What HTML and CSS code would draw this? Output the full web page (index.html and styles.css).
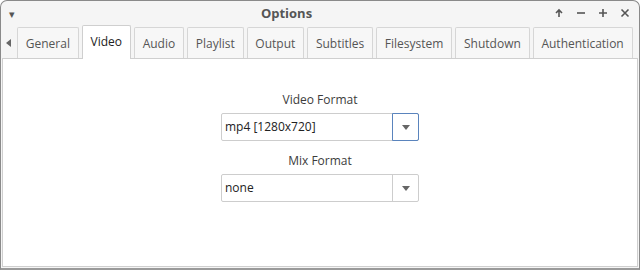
FILE: index.html
```html
<!DOCTYPE html>
<html lang="en">
<head>
  <meta charset="UTF-8" />
  <title>Options</title>
  <link rel="stylesheet" href="styles.css">
</head>
<body>
  <div class="window">
    <div class="titlebar">
      <span class="menu-btn">&#9662;</span>
      <div class="title">Options</div>
      <div class="controls">
        <svg width="10" height="10" viewBox="0 0 10 10"><path d="M5 9V2M2 5l3-3 3 3" stroke="#555" stroke-width="1.6" fill="none"/></svg>
        <svg width="10" height="10" viewBox="0 0 10 10"><path d="M1 5h8" stroke="#555" stroke-width="1.6"/></svg>
        <svg width="10" height="10" viewBox="0 0 10 10"><path d="M1 5h8M5 1v8" stroke="#555" stroke-width="1.6"/></svg>
        <svg width="10" height="10" viewBox="0 0 10 10"><path d="M1.5 1.5l7 7M8.5 1.5l-7 7" stroke="#555" stroke-width="1.6"/></svg>
      </div>
    </div>

    <div class="tabbar">
      <span class="scroll left"></span>
      <div class="tabs">
        <div class="tab">General</div>
        <div class="tab active">Video</div>
        <div class="tab">Audio</div>
        <div class="tab">Playlist</div>
        <div class="tab">Output</div>
        <div class="tab">Subtitles</div>
        <div class="tab">Filesystem</div>
        <div class="tab">Shutdown</div>
        <div class="tab">Authentication</div>
      </div>
      <span class="scroll right"></span>
    </div>

    <div class="pane">
      <div class="field">
        <label>Video Format</label>
        <div class="combo focused">
          <span class="value">mp4 [1280x720]</span>
          <span class="drop"><i></i></span>
        </div>
      </div>
      <div class="field">
        <label>Mix Format</label>
        <div class="combo">
          <span class="value">none</span>
          <span class="drop"><i></i></span>
        </div>
      </div>
    </div>
  </div>
</body>
</html>
```

FILE: styles.css
```css
html, body {
  margin: 0;
  height: 100%;
  background: #ffffff;
}

body {
  font-family: 'Open Sans', sans-serif;
  font-size: 12px;
  line-height: 17px;
  color: #3c3c3c;
}

.window {
  box-sizing: border-box;
  width: 640px;
  height: 270px;
  border: 1px solid #8a8a8a;
  border-bottom: 2px solid #9a9a9a;
  border-radius: 7px 7px 0 0;
  background: #f5f5f5;
  display: flex;
  flex-direction: column;
}

.titlebar {
  height: 24px;
  display: flex;
  align-items: center;
}

.menu-btn {
  font-size: 11px;
  color: #555;
  margin-left: 8px;
  width: 10px;
}

.title {
  flex: 1;
  text-align: center;
  font-weight: 700;
  font-size: 13px;
  color: #555;
  margin-top: 1px;
}

.controls {
  margin-right: 9px;
  display: flex;
  gap: 12px;
}

.tabbar {
  display: flex;
  align-items: flex-end;
  height: 33px;
}

.scroll {
  width: 0;
  height: 0;
  border-top: 4px solid transparent;
  border-bottom: 4px solid transparent;
  align-self: center;
  margin-top: 2px;
}
.scroll.left {
  border-right: 5px solid #666;
  margin-left: 5px;
  margin-right: 6px;
}
.scroll.right {
  border-left: 5px solid #666;
  margin-left: 7px;
}

.tabs {
  display: flex;
  gap: 3px;
  align-items: flex-end;
}

.tab {
  box-sizing: border-box;
  height: 31px;
  padding: 7px 7.8px 0;
  border: 1px solid #d6d6d6;
  border-bottom: none;
  border-radius: 2px 2px 0 0;
  background: #f7f7f7;
  color: #555;
  white-space: nowrap;
}

.tab.active {
  height: 34px;
  padding-top: 7px;
  background: #ffffff;
  color: #222;
  position: relative;
  z-index: 1;
  margin-bottom: -1px;
  border-color: #cfcfcf;
}

.pane {
  flex: 1;
  margin: 0 1px 1px 1px;
  background: #ffffff;
  border: 1px solid #cfcfcf;
  display: flex;
  flex-direction: column;
  align-items: center;
  padding-top: 32px;
  gap: 11px;
}

.field {
  display: flex;
  flex-direction: column;
  align-items: center;
  gap: 5px;
}

.field label {
  color: #3c3c3c;
}

.combo {
  box-sizing: border-box;
  width: 198px;
  height: 28px;
  display: flex;
  border: 1px solid #cdcdcd;
  border-radius: 2px;
  background: #fff;
}

.combo .value {
  flex: 1;
  padding-left: 3px;
  line-height: 26px;
  color: #222;
}

.combo .drop {
  box-sizing: border-box;
  width: 26px;
  border-left: 1px solid #cdcdcd;
  display: flex;
  align-items: center;
  justify-content: center;
}

.combo.focused .drop {
  border: 1px solid #5a84bd;
  margin: -1px -1px -1px 0;
  width: 27px;
  border-radius: 0 2px 2px 0;
}

.combo .drop i {
  width: 0;
  height: 0;
  border-left: 4px solid transparent;
  border-right: 4px solid transparent;
  border-top: 5px solid #666;
}
```
